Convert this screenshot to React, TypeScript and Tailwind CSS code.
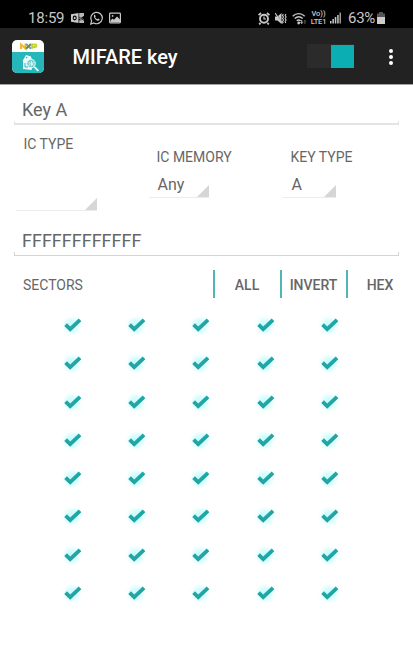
import React from "react";

function AlarmIcon() {
  return (
    <svg className="ml-[186px] h-[13px] w-[12px] shrink-0" viewBox="0 0 12 13" fill="none" stroke="#c8c8c8">
      <circle cx="6" cy="6.8" r="4" strokeWidth="1.9" />
      <path d="M.6 3.2 3 1M11.4 3.2 9 1M2.6 11 1.2 12.4M9.4 11l1.4 1.4" strokeWidth="1.8" />
      <path d="M6 4.5V7h2" strokeWidth="1.2" />
    </svg>
  );
}

function OutlookIcon() {
  return (
    <svg className="ml-[6px] h-[12px] w-[14px] shrink-0" viewBox="0 0 14 12">
      <path d="M0 2.2 7.5 1v10L0 9.8z" fill="#c8c8c8" />
      <ellipse cx="3.7" cy="6" rx="1.5" ry="1.9" fill="none" stroke="#000" strokeWidth="1.1" />
      <path d="M8.2 1H13v3.2L10.4 6 13 7.6V11H8.2V8.2h2L8.2 6.4z" fill="#b8b8b8" />
      <path d="M8.2 5.2 10 6.4l3.6-2.6M10.2 7l3.4 1.6" fill="none" stroke="#000" strokeWidth=".8" />
    </svg>
  );
}

function WhatsAppIcon() {
  return (
    <svg className="ml-[5px] h-[14px] w-[13px] shrink-0" viewBox="0 0 13 14">
      <path d="M.8 13 1.6 9.8A5.7 5.7 0 1 1 3.8 12z" fill="none" stroke="#c8c8c8" strokeWidth="1.2" />
      <path d="M4 4.2c.4-.6 1-.5 1.2 0l.5 1.2-.6.8c.5 1 1.2 1.7 2.2 2.1l.8-.8 1.3.7c.4.3.1 1-.5 1.4C7 10.5 3.2 7 4 4.2z" fill="#c8c8c8" />
    </svg>
  );
}

function PictureIcon() {
  return (
    <svg className="ml-[6px] mr-px h-[12px] w-[12px] shrink-0" viewBox="0 0 12 12">
      <rect x=".6" y="1.1" width="10.8" height="9.8" rx=".8" fill="none" stroke="#c8c8c8" strokeWidth="1.2" />
      <path d="m1.5 8.5 2-2 1.5 1.2 3-3.2 3 3V10h-9.5z" fill="#c8c8c8" />
      <circle cx="3.6" cy="3.9" r=".9" fill="#c8c8c8" />
    </svg>
  );
}

function MuteIcon() {
  return (
    <svg className="ml-[5px] h-[13px] w-[12px] shrink-0" viewBox="0 0 12 13">
      <path d="M0 4.5h2.5L6.5 1v11L2.5 8.5H0z" fill="#c8c8c8" />
      <path d="m.8.8 6.5 10.5" stroke="#000" strokeWidth=".6" />
      <path d="m0 1 7.5 10.5" stroke="#c8c8c8" strokeWidth="1.2" />
      <path d="m8.3 2-.8 1.5 1 1.5-1 1.5 1 1.5-1 1.5.8 1.5M10.9 2l-.8 1.5 1 1.5-1 1.5 1 1.5-1 1.5.8 1.5" fill="none" stroke="#c8c8c8" strokeWidth="1.1" />
    </svg>
  );
}

function WifiIcon() {
  return (
    <svg className="ml-[5px] h-[13px] w-[15px] shrink-0" viewBox="0 0 15 13" fill="none" stroke="#c8c8c8" strokeWidth="1.4">
      <path d="M.7 4.2c3.5-3.4 8.6-3.4 12 0M2.7 6.6c2.4-2.2 5.6-2.2 8 0M4.7 8.8c1.2-1 2.8-1 4 0" />
      <path d="M9.7 8v3.5m-1.2-1.2 1.2 1.2 1.2-1.2" strokeWidth="1" />
      <path d="M12.9 12V8.5m-1 1 1-1 1 1" strokeWidth=".8" stroke="#777" />
      <circle cx="6.7" cy="11" r=".7" fill="#c8c8c8" />
    </svg>
  );
}

function SignalIcon() {
  return (
    <svg className="ml-[3px] h-[12px] w-[11px] shrink-0" viewBox="0 0 11 12" fill="#c8c8c8">
      <rect x="0" y="9" width="1.5" height="2.5" />
      <rect x="2.4" y="7" width="1.5" height="4.5" />
      <rect x="4.8" y="5" width="1.5" height="6.5" />
      <rect x="7.2" y="3" width="1.5" height="8.5" />
      <rect x="9.5" y=".5" width="1.5" height="11" fill="#999" />
    </svg>
  );
}

function AppIcon() {
  return (
    <div className="flex h-[33px] w-[32px] shrink-0 flex-col overflow-hidden rounded-[5px] bg-white">
      <svg className="h-[12px] w-[32px]" viewBox="0 0 32 12" fill="none" strokeWidth="2">
        <path d="M9 9V4.4l4.5 4V3.5" stroke="#eeb92c" />
        <path d="m14 4 5 4.7" stroke="#729fb5" />
        <path d="m19 4-5 4.7" stroke="#6b8b48" />
        <path d="M20 9V4.5h3.2q1.3 0 1.3 1.2T23.2 7H20" stroke="#c4d22f" strokeWidth="1.8" />
      </svg>
      <svg className="h-[21px] w-[32px] bg-[#26b7ba]" viewBox="0 0 32 21">
        <path d="M11 8.2 14 3l5 1.5.8 3.3V18l-8.8-1z" fill="#eefafa" />
        <circle cx="14.6" cy="5.5" r=".8" fill="#26b7ba" />
        <circle cx="19" cy="11.5" r="4.3" fill="#79d0d2" stroke="#edf9f9" strokeWidth="1" />
        <path d="m16.5 10 2 2-2 1.5m3-4.5v5m2-4-1.5 2 1.5 1.5" stroke="#fff" strokeWidth=".7" fill="none" />
        <path d="M13 11v4h3" stroke="#26b7ba" fill="none" />
        <path d="m22.3 14.8 4 4" stroke="white" strokeWidth="1.8" />
      </svg>
    </div>
  );
}

function Check() {
  return (
    <div className="flex items-center justify-center">
      <svg className="h-[26px] w-[26px]" viewBox="0 0 26 26" fill="none">
        <defs>
          <radialGradient id="glow">
            <stop offset="0" stopColor="#c4fafa" />
            <stop offset=".5" stopColor="#dcfdfd" />
            <stop offset="1" stopColor="#fff" stopOpacity="0" />
          </radialGradient>
        </defs>
        <circle cx="12" cy="13.5" r="12" fill="url(#glow)" />
        <path d="m5.6 12.7 4.6 4.5 9.8-9.4" stroke="#1fa8a8" strokeWidth="3.8" />
        <path d="m5 13.9 5.2 4.6L20.5 8.7" stroke="#398c8c" strokeWidth=".8" strokeOpacity=".5" />
      </svg>
    </div>
  );
}

function Spinner({ label, value, className, box }: { label: string; value: string; className: string; box: string }) {
  return (
    <div className={`flex flex-col ${className}`}>
      <div className="ml-[7.5px] whitespace-nowrap text-[14px] leading-4">{label}</div>
      <div className={`flex items-end justify-between border-b border-[#ececec] ${box}`}>
        <span className="self-start pl-[8.5px] text-[16px] leading-5">{value}</span>
        <svg className="h-[12px] w-[12px]" viewBox="0 0 12 12">
          <path d="M12 0v12H0z" fill="#d6d6d6" />
        </svg>
      </div>
    </div>
  );
}

function Field({ value, className, line }: { value: string; className: string; line: string }) {
  return (
    <div className={`mx-[14px] flex flex-col justify-end ${className}`}>
      <div className="shrink-0 pl-[8px] text-[18px] leading-[22px]">{value}</div>
      <div className={`shrink-0 border-x ${line}`} />
    </div>
  );
}

export default function App() {
  return (
    <div className="h-[648px] w-[413px] overflow-hidden bg-white font-['Roboto',sans-serif] text-[#666]">
      <div className="flex h-[28px] items-center bg-black pt-[8px] text-[15px] text-[#c8c8c8]">
        <span className="ml-[28px] w-[37px] shrink-0 tracking-[-0.2px]">18:59</span>
        <OutlookIcon />
        <WhatsAppIcon />
        <PictureIcon />
        <div className="-ml-[50px] flex items-center">
          <AlarmIcon />
          <MuteIcon />
          <WifiIcon />
          <div className="ml-[3px] flex w-[17px] shrink-0 flex-col items-center text-[7.5px] font-medium leading-[8px]">
            <div className="h-[7.5px]">Vo))</div>
            <div className="h-[8px] tracking-[-0.2px]">LTE1</div>
          </div>
          <SignalIcon />
          <span className="ml-[7px] w-[28px] shrink-0 tracking-[-0.3px]">63%</span>
          <svg className="ml-px h-[12px] w-[8px] shrink-0" viewBox="0 0 8 12">
            <path d="M2 0h4v1.5h2V5H0V1.5h2z" fill="#555" />
            <path d="M0 5h8v7H0z" fill="#ccc" />
          </svg>
        </div>
      </div>
      <header className="flex h-[56px] items-center bg-[#222] pl-[12px]">
        <AppIcon />
        <h1 className="ml-[28.5px] w-[234.5px] pt-[2px] text-[20px] font-medium text-white">MIFARE key</h1>
        <div className="flex h-[24px] w-[47px] items-center justify-end bg-[#2b2b2b]">
          <div className="h-[23px] w-[23px] bg-[#0baeb3]" />
        </div>
        <div className="ml-[35px] flex flex-col gap-[2px] pt-px">
          <i className="size-[4px] rounded-full bg-white" />
          <i className="size-[4px] rounded-full bg-white" />
          <i className="size-[4px] rounded-full bg-white" />
        </div>
      </header>
      <div className="h-px bg-[#a5a5a5]" />
      <Field value="Key A" className="h-[40px]" line="h-[4px] border-b-2 border-[#e4e4e4]" />
      <div className="flex h-[106px]">
        <Spinner label="IC TYPE" value="" className="ml-[16px] mt-[11px] w-[81px]" box="h-[59px]" />
        <Spinner label="IC MEMORY" value="Any" className="ml-[52px] mt-[24px] w-[60px]" box="mt-[10px] h-[23px]" />
        <Spinner label="KEY TYPE" value="A" className="ml-[74px] mt-[24px] w-[53px]" box="mt-[10px] h-[23px]" />
      </div>
      <Field value="FFFFFFFFFFFF" className="h-[25px]" line="h-[4px] border-b border-[#d5d5d5]" />
      <div className="mt-[14px] flex h-[28px] items-center text-[14px]">
        <span className="ml-[23px] w-[189.5px] pt-[2px]">SECTORS</span>
        <button className="h-full w-[67px] border-l-2 border-[#52b5b5] pt-[2px] font-medium">ALL</button>
        <button className="h-full w-[66px] border-l-2 border-[#52b5b5] pt-[2px] font-medium">INVERT</button>
        <button className="h-full w-[67px] border-l-2 border-[#52b5b5] pt-[2px] font-medium">HEX</button>
      </div>
      <div className="ml-[41px] mt-[8px] grid h-[306px] w-[321px] grid-cols-5 grid-rows-8">
        {Array.from({ length: 40 }, (_, i) => (
          <Check key={i} />
        ))}
      </div>
    </div>
  );
}
